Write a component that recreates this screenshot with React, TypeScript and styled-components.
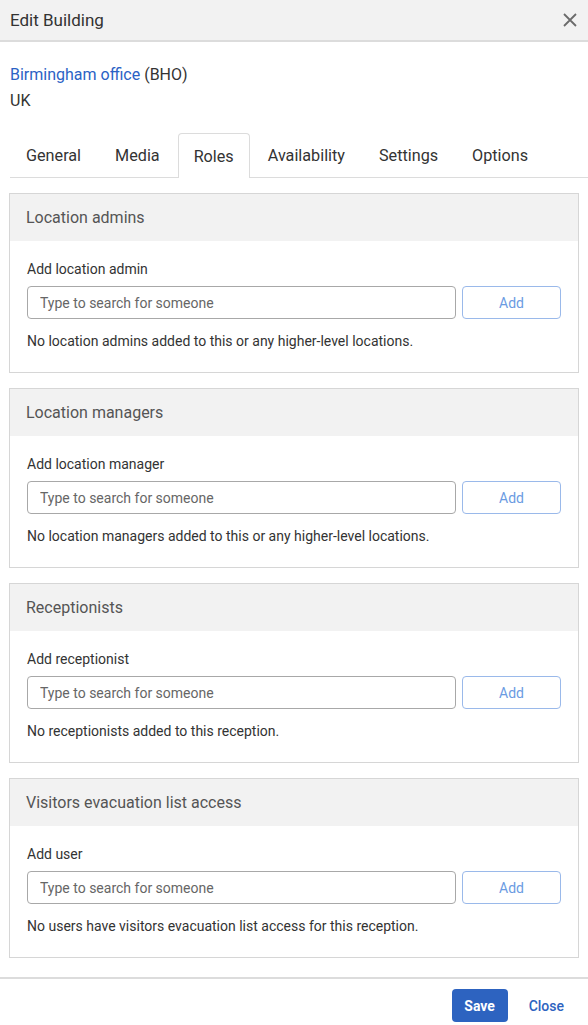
import React from "react";
import styled, { createGlobalStyle } from "styled-components";

const GlobalStyle = createGlobalStyle`
    body {
        margin: 0;
        background: #fff;
        font-family: Roboto, "Liberation Sans", Arial, sans-serif;
        color: #333;
    }
`;

const Modal = styled.div`
    width: 588px;
    height: 1025px;
    display: flex;
    flex-direction: column;
    background: #fff;
    overflow: hidden;
`;

const Header = styled.div`
    height: 40px;
    flex: none;
    display: flex;
    align-items: center;
    justify-content: space-between;
    padding: 0 10px;
    background: #f2f2f2;
    border-bottom: 2px solid #dcdcdc;
`;

const Title = styled.h1`
    margin: 0;
    font-size: 17px;
    font-weight: 400;
    color: #333;
`;

const CloseIcon = styled.button`
    border: none;
    background: none;
    padding: 0;
    display: flex;
    cursor: pointer;
`;

const Body = styled.div`
    flex: 1;
    padding: 20px 10px 0;
`;

const Building = styled.div`
    font-size: 16px;
    line-height: 26px;
    color: #333;
    margin-bottom: 19px;

    .name {
        color: #2b62c5;
    }
`;

const Tabs = styled.div`
    display: flex;
    height: 44px;
    border-bottom: 1px solid #dcdcdc;
    margin: 0 -10px 0 0;
`;

const Tab = styled.div<{ $active?: boolean }>`
    display: flex;
    align-items: center;
    padding: 0 15px;
    margin-right: 2px;
    font-size: 16.2px;
    color: #333;
    border: 1px solid ${(p) => (p.$active ? "#dcdcdc" : "transparent")};
    border-bottom: none;
    border-radius: 4px 4px 0 0;
    background: #fff;
    margin-bottom: ${(p) => (p.$active ? "-1px" : "0")};
    height: ${(p) => (p.$active ? "44px" : "auto")};
`;

const Panels = styled.div`
    display: flex;
    flex-direction: column;
    gap: 15px;
    padding: 15px 0 0;
`;

const Panel = styled.section`
    border: 1px solid #d6d6d6;
    margin: 0 -1px;
`;

const PanelHeader = styled.div`
    height: 47px;
    display: flex;
    align-items: center;
    padding: 0 16px;
    background: #f2f2f2;
    font-size: 16px;
    color: #555;
`;

const PanelBody = styled.div`
    padding: 19px 17px 22px;
`;

const Label = styled.div`
    font-size: 14px;
    line-height: 18px;
    color: #333;
    margin-bottom: 8px;
`;

const SearchRow = styled.div`
    display: flex;
    gap: 6px;
`;

const SearchInput = styled.input`
    flex: 1;
    height: 33px;
    box-sizing: border-box;
    border: 1px solid #a8a8a8;
    border-radius: 4px;
    padding: 0 12px;
    font-family: inherit;
    font-size: 14px;
    color: #333;

    &::placeholder {
        color: #666;
    }
`;

const AddButton = styled.button`
    width: 99px;
    height: 33px;
    border: 1px solid #9ab9ea;
    border-radius: 4px;
    background: #fff;
    color: #6b9be2;
    font-family: inherit;
    font-size: 14px;
`;

const Message = styled.p`
    margin: 13px 0 0;
    font-size: 14px;
    line-height: 18px;
    color: #333;
`;

const Footer = styled.div`
    flex: none;
    height: 48px;
    box-sizing: border-box;
    border-top: 2px solid #dcdcdc;
    display: flex;
    align-items: flex-start;
    justify-content: flex-end;
    gap: 21px;
    padding: 10px 24px 0 0;
`;

const SaveButton = styled.button`
    width: 56px;
    height: 33px;
    border: none;
    border-radius: 4px;
    background: #2d63c0;
    color: #fff;
    font-family: inherit;
    font-size: 14px;
    font-weight: 700;
`;

const LinkButton = styled.button`
    border: none;
    background: none;
    padding: 0;
    height: 33px;
    color: #2d63c0;
    font-family: inherit;
    font-size: 14px;
    font-weight: 500;
`;

const tabs = ["General", "Media", "Roles", "Availability", "Settings", "Options"];

const roles = [
    {
        title: "Location admins",
        label: "Add location admin",
        empty: "No location admins added to this or any higher-level locations.",
    },
    {
        title: "Location managers",
        label: "Add location manager",
        empty: "No location managers added to this or any higher-level locations.",
    },
    {
        title: "Receptionists",
        label: "Add receptionist",
        empty: "No receptionists added to this reception.",
    },
    {
        title: "Visitors evacuation list access",
        label: "Add user",
        empty: "No users have visitors evacuation list access for this reception.",
    },
];

function App() {
    return (
        <>
            <GlobalStyle />
            <Modal>
                <Header>
                    <Title>Edit Building</Title>
                    <CloseIcon aria-label="Close">
                        <svg width="16" height="16" viewBox="0 0 16 16">
                            <path d="M2 2 L14 14 M14 2 L2 14" stroke="#6b6b6b" strokeWidth="1.8" />
                        </svg>
                    </CloseIcon>
                </Header>
                <Body>
                    <Building>
                        <div>
                            <span className="name">Birmingham office</span> (BHO)
                        </div>
                        <div>UK</div>
                    </Building>
                    <Tabs>
                        {tabs.map((t) => (
                            <Tab key={t} $active={t === "Roles"}>
                                {t}
                            </Tab>
                        ))}
                    </Tabs>
                    <Panels>
                        {roles.map((r) => (
                            <Panel key={r.title}>
                                <PanelHeader>{r.title}</PanelHeader>
                                <PanelBody>
                                    <Label>{r.label}</Label>
                                    <SearchRow>
                                        <SearchInput placeholder="Type to search for someone" />
                                        <AddButton>Add</AddButton>
                                    </SearchRow>
                                    <Message>{r.empty}</Message>
                                </PanelBody>
                            </Panel>
                        ))}
                    </Panels>
                </Body>
                <Footer>
                    <SaveButton>Save</SaveButton>
                    <LinkButton>Close</LinkButton>
                </Footer>
            </Modal>
        </>
    );
}

export default App;
